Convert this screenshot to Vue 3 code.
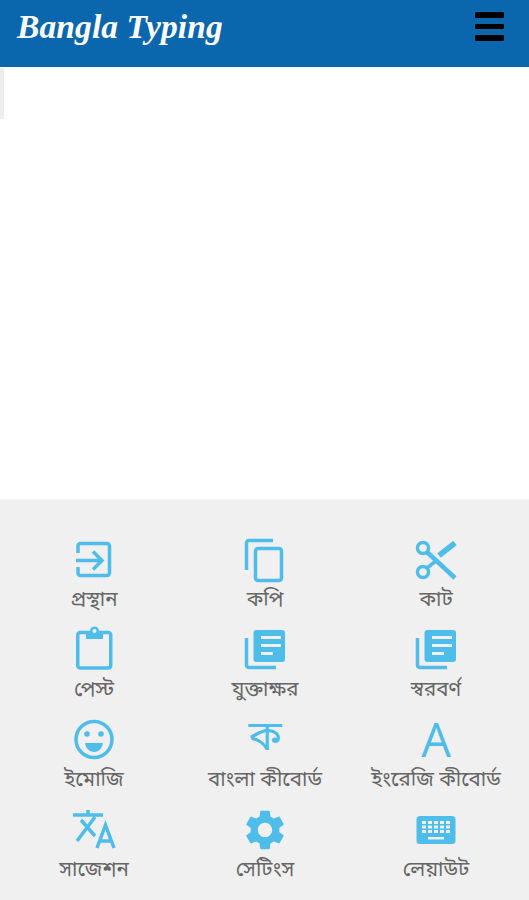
<template>
  <div class="app">
    <header class="topbar">
      <h1 class="title">Bangla Typing</h1>
      <div class="menu"><span></span><span></span><span></span></div>
    </header>

    <main class="editor">
      <div class="sliver"></div>
    </main>

    <section class="tools">
      <div class="tool" v-for="tool in tools" :key="tool.id">
        <div class="icon">
          <svg v-if="tool.id === 'exit'" width="48" height="48" viewBox="0 0 48 48" fill="none" stroke="#4fbde9" stroke-width="3.5">
            <path d="M8 17V10a2.500 2.500 0 0 1 2.500-2.500H37a2.500 2.500 0 0 1 2.500 2.500V37a2.500 2.500 0 0 1-2.500 2.500H10.500a2.500 2.500 0 0 1-2.500-2.500V31" />
            <path d="M6 24.500H32M23 15.500l9 9-9 9" />
          </svg>

          <svg v-else-if="tool.id === 'copy'" width="48" height="48" viewBox="0 0 48 48" fill="none" stroke="#4fbde9" stroke-width="3.5">
            <path d="M5.500 34V7a2.500 2.500 0 0 1 2.500-2.500H32" />
            <rect x="14.500" y="12.500" width="26" height="32" rx="2.500" />
          </svg>

          <svg v-else-if="tool.id === 'cut'" width="48" height="48" viewBox="0 0 48 48" fill="none" stroke="#4fbde9" stroke-width="3.500">
            <circle cx="11" cy="12" r="5.500" />
            <circle cx="11" cy="36" r="5.500" />
            <path d="M15 16L43 42" stroke-width="4.500" />
            <path d="M15 32L24 25" />
            <path d="M27 19.500L43 7" stroke-width="5.500" />
          </svg>

          <svg v-else-if="tool.id === 'paste'" width="48" height="48" viewBox="0 0 48 48" fill="none" stroke="#4fbde9" stroke-width="3.5">
            <rect x="7.750" y="6.500" width="33" height="35.500" rx="2.500" />
            <path d="M16 5H33V13H16Z" fill="#4fbde9" stroke="none" />
            <circle cx="24.500" cy="5" r="4.500" fill="#4fbde9" stroke="none" />
            <circle cx="24.500" cy="5" r="2" fill="#f0f0f0" stroke="none" />
          </svg>

          <svg v-else-if="tool.id === 'library' || tool.id === 'vowel'" width="48" height="48" viewBox="0 0 48 48" fill="none">
            <g transform="translate(2 0)">
              <path d="M3.500 12V39a2.500 2.500 0 0 0 2.500 2.500H33" stroke="#4fbde9" stroke-width="3.5" />
              <rect x="10.500" y="4" width="31.500" height="32" rx="3" fill="#4fbde9" />
              <path d="M18 11.500H38M18 19.500H38M18 27.500H30" stroke="#f0f0f0" stroke-width="3" />
            </g>
          </svg>

          <svg v-else-if="tool.id === 'emoji'" width="48" height="48" viewBox="0 0 48 48" fill="none" stroke="#4fbde9" stroke-width="3.5">
            <circle cx="24" cy="23.500" r="18" />
            <circle cx="17" cy="18" r="2.800" fill="#4fbde9" stroke="none" />
            <circle cx="31" cy="18" r="2.800" fill="#4fbde9" stroke="none" />
            <path d="M15 27H33C32 33 28 36 24 36S16 33 15 27Z" fill="#4fbde9" stroke="none" />
          </svg>

          <span v-else-if="tool.id === 'bn'" class="glyph glyph-bn">ক</span>
          <span v-else-if="tool.id === 'en'" class="glyph glyph-en">A</span>

          <svg v-else-if="tool.id === 'suggest'" width="48" height="48" viewBox="0 0 48 48" fill="none" stroke="#4fbde9" stroke-width="3.5">
            <path d="M3 9H33M18 4V9M7 35L25 11M11 14L25 30" />
            <path d="M27 42L35.500 19L44 42M30 35H41" />
          </svg>

          <svg v-else-if="tool.id === 'settings'" width="48" height="48" viewBox="0 0 24 24" fill="#4fbde9">
            <path d="M19.14 12.94c.04-.3.06-.61.06-.94 0-.32-.02-.64-.07-.94l2.03-1.58c.18-.14.23-.41.12-.61l-1.92-3.32c-.12-.22-.37-.29-.59-.22l-2.39.96c-.5-.38-1.03-.7-1.62-.94l-.36-2.54c-.04-.24-.24-.41-.48-.41h-3.84c-.24 0-.43.17-.47.41l-.36 2.54c-.59.24-1.13.57-1.62.94l-2.39-.96c-.22-.08-.47 0-.59.22L2.74 8.87c-.12.21-.08.47.12.61l2.03 1.58c-.05.3-.09.63-.09.94s.02.64.07.94l-2.03 1.58c-.18.14-.23.41-.12.61l1.920 3.32c.12.22.37.29.59.22l2.39-.96c.5.38 1.03.7 1.62.94l.36 2.54c.05.24.24.41.48.41h3.84c.24 0 .44-.17.47-.41l.36-2.54c.59-.24 1.13-.56 1.62-.94l2.39.96c.22.08.47 0 .59-.22l1.92-3.32c.12-.22.07-.47-.12-.61l-2.01-1.58zM12 15.6c-1.98 0-3.6-1.62-3.6-3.6s1.62-3.6 3.6-3.6 3.6 1.62 3.6 3.6-1.62 3.6-3.6 3.6z" />
          </svg>

          <svg v-else width="48" height="48" viewBox="0 0 48 48">
            <rect x="4.500" y="10" width="39" height="28" rx="3.500" fill="#4fbde9" />
            <g fill="#f0f0f0">
              <rect v-for="key in keys" :key="key.x + '-' + key.y" :x="key.x" :y="key.y" width="4" height="3" />
              <rect x="16" y="31" width="16" height="2.500" />
            </g>
          </svg>
        </div>
        <div class="label">{{ tool.label }}</div>
      </div>
    </section>
  </div>
</template>

<script setup>
const tools = [
  { id: 'exit', label: 'প্রস্থান' },
  { id: 'copy', label: 'কপি' },
  { id: 'cut', label: 'কাট' },
  { id: 'paste', label: 'পেস্ট' },
  { id: 'library', label: 'যুক্তাক্ষর' },
  { id: 'vowel', label: 'স্বরবর্ণ' },
  { id: 'emoji', label: 'ইমোজি' },
  { id: 'bn', label: 'বাংলা কীবোর্ড' },
  { id: 'en', label: 'ইংরেজি কীবোর্ড' },
  { id: 'suggest', label: 'সাজেশন' },
  { id: 'settings', label: 'সেটিংস' },
  { id: 'layout', label: 'লেয়াউট' }
]

// keyboard key dots, three rows
const keys = []
for (let row = 0; row < 3; row++) {
  for (let col = 0; col < 5; col++) {
    keys.push({ x: 10 + col * 6, y: 15 + row * 4.5 })
  }
}
</script>

<style scoped>
.app {
  width: 529px;
  height: 900px;
  display: flex;
  flex-direction: column;
  background: #fff;
  overflow: hidden;
}

.topbar {
  height: 67px;
  flex-shrink: 0;
  box-sizing: border-box;
  background: #0a66ad;
  display: flex;
  justify-content: space-between;
  align-items: flex-start;
  padding: 12px 25px 0 17px;
}

.title {
  margin: -2px 0 0;
  color: #fff;
  font-family: "Liberation Serif", serif;
  font-style: italic;
  font-weight: 700;
  font-size: 33.5px;
  letter-spacing: 0.1px;
  line-height: 34px;
}

.menu {
  width: 29px;
  display: flex;
  flex-direction: column;
  gap: 6px;
}

.menu span {
  height: 5.5px;
  background: #000;
  border-radius: 1px;
}

.editor {
  flex: 1;
  padding-top: 1px;
}

.sliver {
  width: 4px;
  height: 51px;
  background: #eee;
}

.tools {
  height: 401px;
  flex-shrink: 0;
  background: #f0f0f0;
  box-sizing: border-box;
  padding: 37px 8.5px 0;
  display: grid;
  grid-template-columns: repeat(3, 171px);
  grid-auto-rows: 90px;
}

.tool {
  display: flex;
  flex-direction: column;
  align-items: center;
}

.icon {
  width: 48px;
  height: 48px;
  display: flex;
  align-items: center;
  justify-content: center;
}

.glyph {
  color: #4fbde9;
  line-height: 48px;
}

.glyph-bn {
  font-family: "Noto Sans Bengali", "Noto Sans", sans-serif;
  font-size: 41px;
}

.glyph-en {
  font-family: "Open Sans", sans-serif;
  font-size: 47px;
  margin-top: -2px;
}

.label {
  margin-top: 5px;
  color: #666;
  font-family: "Noto Sans Bengali", "Noto Sans", "Liberation Sans", sans-serif;
  font-size: 20.5px;
  line-height: 24px;
  white-space: nowrap;
}
</style>
